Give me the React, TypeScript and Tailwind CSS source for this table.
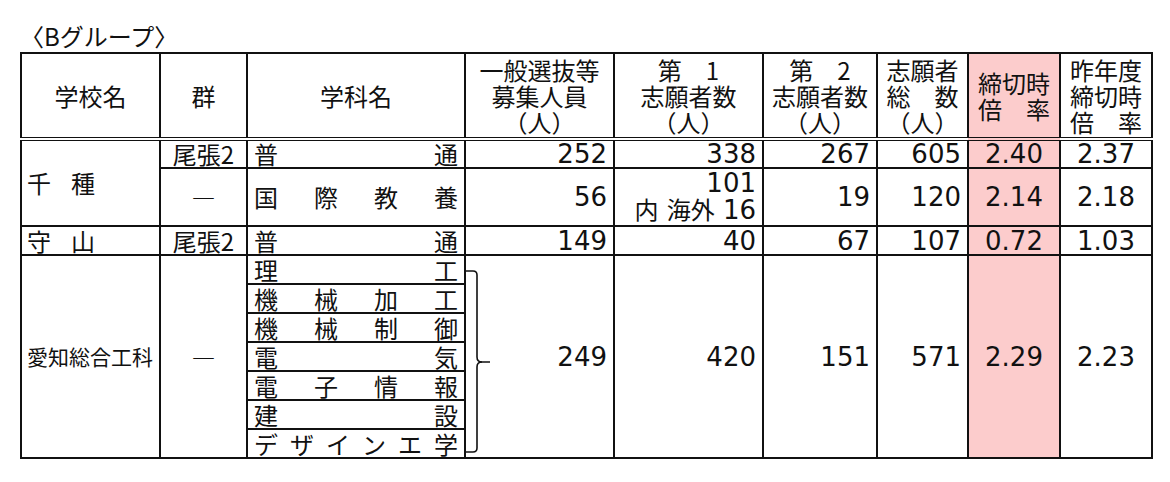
import React from "react";

const num = "font-['DejaVu_Sans','Noto_Sans_CJK_JP',sans-serif] text-[26px] leading-none";
const cell = "border-2 border-[#111] px-[6px] py-0";
const pink = "bg-[#fccccc]";

function Spread({ chars }: { chars: string[] }) {
  return (
    <div className="flex justify-between leading-none">
      {chars.map((c, i) => (
        <span key={i}>{c}</span>
      ))}
    </div>
  );
}

function Bracket() {
  return (
    <svg
      className="absolute left-0 top-0"
      width="32"
      height="204"
      viewBox="0 0 32 204"
      fill="none"
      stroke="#111"
      strokeWidth="1.6"
    >
      <path d="M0 15 H7 Q11 15 11 19 V101 Q11 106 16 106 H24" />
      <path d="M16 106 Q11 106 11 111 V192 Q11 196 7 196 H0" />
    </svg>
  );
}

export default function App() {
  const subjects: string[][] = [
    ["理", "工"],
    ["機", "械", "加", "工"],
    ["機", "械", "制", "御"],
    ["電", "気"],
    ["電", "子", "情", "報"],
    ["建", "設"],
    ["デ", "ザ", "イ", "ン", "エ", "学"],
  ];

  return (
    <div className="w-[1170px] h-[482px] bg-white text-[#111] font-['DejaVu_Sans','Noto_Sans_CJK_JP',sans-serif] pl-[20px] pt-[22px]">
      <div className="h-[30px] text-[24px] leading-[28px] font-['Noto_Sans_CJK_JP',sans-serif]">
        〈Bグループ〉
      </div>
      <table className="table-fixed border-collapse w-[1133px] text-[24px] font-['Noto_Sans_CJK_JP',sans-serif]">
        <colgroup>
          <col className="w-[139px]" />
          <col className="w-[87px]" />
          <col className="w-[218px]" />
          <col className="w-[149px]" />
          <col className="w-[149px]" />
          <col className="w-[114px]" />
          <col className="w-[91px]" />
          <col className="w-[92px]" />
          <col className="w-[92px]" />
        </colgroup>
        <thead>
          <tr className="h-[86px] leading-[26px] text-center">
            {[
              ["学校名"],
              ["群"],
              ["学科名"],
              ["一般選抜等", "募集人員", "（人）"],
              ["第　1", "志願者数", "（人）"],
              ["第　2", "志願者数", "（人）"],
              ["志願者", "総　数", "（人）"],
              ["締切時", "倍　率"],
              ["昨年度", "締切時", "倍　率"],
            ].map((lines, i) => (
              <th
                key={i}
                className={`border-2 border-[#111] border-b-[4px] [border-bottom-style:double] px-0 py-0 font-normal ${i === 7 ? pink : ""}`}
              >
                {lines.map((l, j) => (
                  <div key={j}>{l}</div>
                ))}
              </th>
            ))}
          </tr>
        </thead>
        <tbody>
          <tr className="h-[28px]">
            <td rowSpan={2} className={`${cell} pl-[5px] text-left`}>
              <span>千</span>
              <span className="ml-[20px]">種</span>
            </td>
            <td className={`${cell} text-center leading-none`}>尾張2</td>
            <td className={cell}>
              <Spread chars={["普", "通"]} />
            </td>
            <td className={`${cell} text-right ${num}`}>252</td>
            <td className={`${cell} text-right ${num}`}>338</td>
            <td className={`${cell} text-right ${num}`}>267</td>
            <td className={`${cell} text-right ${num}`}>605</td>
            <td className={`${cell} ${pink} text-center ${num}`}>2.40</td>
            <td className={`${cell} text-center ${num}`}>2.37</td>
          </tr>
          <tr className="h-[58px]">
            <td className={`${cell} text-center`}>―</td>
            <td className={cell}>
              <Spread chars={["国", "際", "教", "養"]} />
            </td>
            <td className={`${cell} text-right ${num}`}>56</td>
            <td className={`${cell} text-right ${num}`}>
              <div className="leading-[27px]">101</div>
              <div className="leading-[27px]">
                <span className="text-[24px]">内</span> <span className="text-[24px]">海外</span> 16
              </div>
            </td>
            <td className={`${cell} text-right ${num}`}>19</td>
            <td className={`${cell} text-right ${num}`}>120</td>
            <td className={`${cell} ${pink} text-center ${num}`}>2.14</td>
            <td className={`${cell} text-center ${num}`}>2.18</td>
          </tr>
          <tr className="h-[29px]">
            <td className={`${cell} pl-[5px] text-left leading-none`}>
              <span>守</span>
              <span className="ml-[20px]">山</span>
            </td>
            <td className={`${cell} text-center leading-none`}>尾張2</td>
            <td className={cell}>
              <Spread chars={["普", "通"]} />
            </td>
            <td className={`${cell} text-right ${num}`}>149</td>
            <td className={`${cell} text-right ${num}`}>40</td>
            <td className={`${cell} text-right ${num}`}>67</td>
            <td className={`${cell} text-right ${num}`}>107</td>
            <td className={`${cell} ${pink} text-center ${num}`}>0.72</td>
            <td className={`${cell} text-center ${num}`}>1.03</td>
          </tr>
          {subjects.map((s, i) => (
            <tr key={i} className="h-[29px]">
              {i === 0 && (
                <>
                  <td rowSpan={7} className={`${cell} pl-[5px] text-left text-[21px]`}>
                    愛知総合工科
                  </td>
                  <td rowSpan={7} className={`${cell} text-center`}>―</td>
                </>
              )}
              <td className={cell}>
                <Spread chars={s} />
              </td>
              {i === 0 && (
                <>
                  <td rowSpan={7} className={`${cell} relative text-right ${num}`}>
                    <Bracket />
                    249
                  </td>
                  <td rowSpan={7} className={`${cell} text-right ${num}`}>420</td>
                  <td rowSpan={7} className={`${cell} text-right ${num}`}>151</td>
                  <td rowSpan={7} className={`${cell} text-right ${num}`}>571</td>
                  <td rowSpan={7} className={`${cell} ${pink} text-center ${num}`}>2.29</td>
                  <td rowSpan={7} className={`${cell} text-center ${num}`}>2.23</td>
                </>
              )}
            </tr>
          ))}
        </tbody>
      </table>
    </div>
  );
}
